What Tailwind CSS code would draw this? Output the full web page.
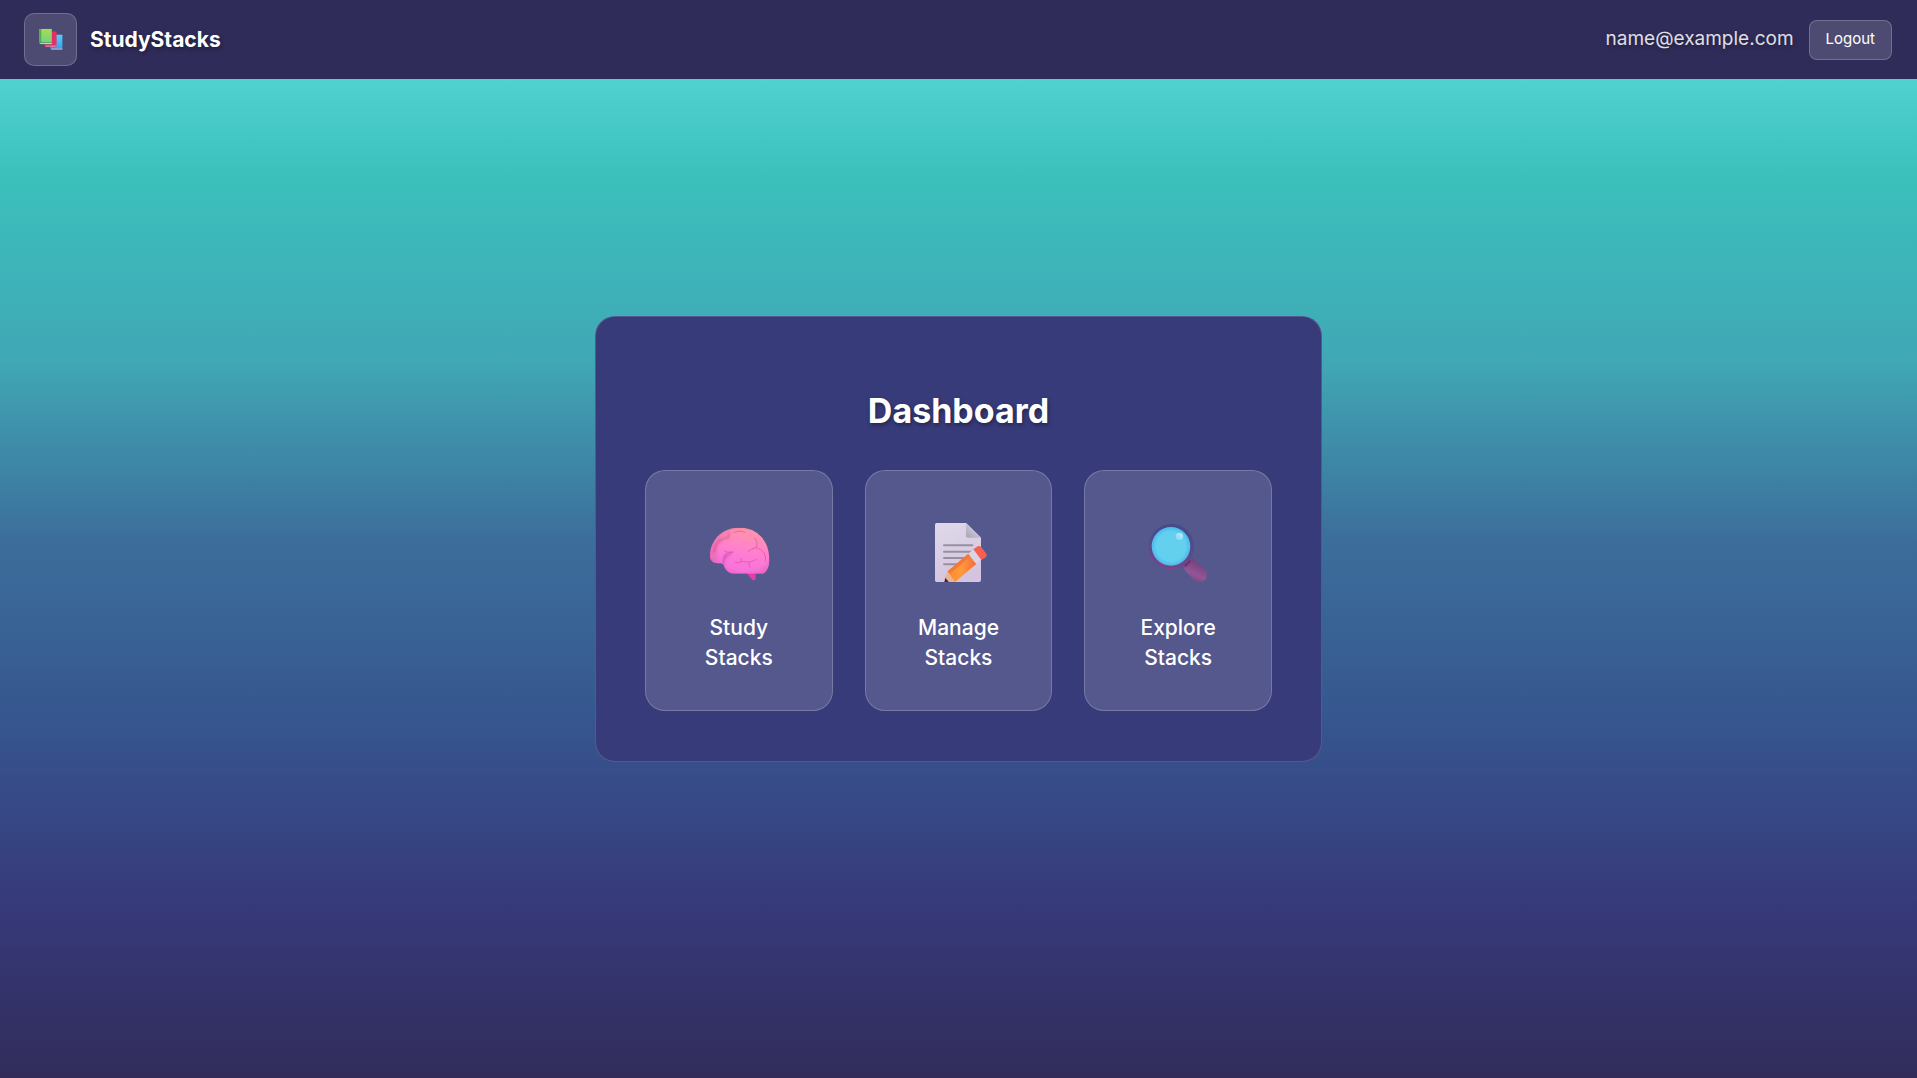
<!DOCTYPE html>
<html lang="en">
  <head>
    <meta charset="UTF-8" />
    <meta name="viewport" content="width=device-width, initial-scale=1.0" />
    <title>StudyStacks - Dashboard</title>
    <script src="https://cdn.jsdelivr.net/npm/@tailwindcss/browser@4"></script>
  </head>

  <body
    class="min-h-screen bg-[linear-gradient(180deg,#61e0df_0%,#3bc0bc_16.67%,#40a8b5_33.33%,#3c6e9b_50%,#36568f_66.67%,#373a7b_83.33%,#312c5a_100%)] font-['Inter',sans-serif] text-white"
  >
    <!-- Header -->
    <header
      class="fixed inset-x-0 top-0 flex items-center justify-between bg-[#302c5a] py-[13px] pr-[25px] pl-6"
    >
      <a href="#" class="flex items-center gap-[13px]">
        <span
          class="flex size-[53px] items-center justify-center rounded-[10px] border border-white/20 bg-white/15"
        >
          <svg class="size-6" viewBox="56 60 75 75" aria-hidden="true">
            <defs>
              <linearGradient id="bookGreen" x1="0" y1="0" x2="0" y2="1">
                <stop offset="0" stop-color="#a8dc50" />
                <stop offset="1" stop-color="#70d284" />
              </linearGradient>
              <linearGradient id="bookBlue" x1="0" y1="0" x2="0" y2="1">
                <stop offset="0" stop-color="#55cff4" />
                <stop offset="1" stop-color="#35a6f6" />
              </linearGradient>
            </defs>
            <path d="M91 81h38v42H91z" fill="url(#bookBlue)" />
            <path d="M91 123h38v6H94q-3 0-3-3z" fill="#2d78c8" />
            <path d="M94 124h35v3H94z" fill="#d5c8ef" />
            <path d="M73 71h38v42H73z" fill="#e52e63" />
            <path d="M73 113h38v7H76q-3 0-3-3z" fill="#b92558" />
            <path d="M76 115h35v3H76z" fill="#d5c2e0" />
            <path d="M57 63h39v43H57z" fill="url(#bookGreen)" />
            <path d="M57 63h6v43h-6z" fill="#55a955" />
            <path d="M57 105h39v6H60q-3 0-3-3z" fill="#469a63" />
            <path d="M60 107h36v3H60z" fill="#d5cce5" />
          </svg>
        </span>
        <span
          class="text-[21px] font-bold [text-shadow:1px_2px_4px_rgba(0,0,0,0.4)]"
          >StudyStacks</span
        >
      </a>

      <div class="flex items-center gap-[15px]">
        <span
          class="text-[19px] text-white/85 [text-shadow:1px_2px_4px_rgba(0,0,0,0.4)]"
          >name@example.com</span
        >
        <button
          type="button"
          class="h-10 cursor-pointer rounded-lg border border-white/20 bg-white/15 px-4 text-[15px] hover:bg-white/25"
        >
          Logout
        </button>
      </div>
    </header>

    <!-- Dashboard -->
    <main class="flex min-h-screen items-center justify-center">
      <section
        class="w-full max-w-[727px] rounded-[20px] border border-white/15 bg-[#383b7a] p-[49px] pb-[50px]"
      >
        <h1
          class="mt-6 mb-[38px] text-center text-[34px] leading-[42px] font-bold [text-shadow:1px_2px_4px_rgba(0,0,0,0.4)]"
        >
          Dashboard
        </h1>

        <div class="grid grid-cols-3 gap-8">
          <!-- Study -->
          <a
            href="#"
            class="flex flex-col items-center rounded-[20px] border border-white/20 bg-white/15 px-8 py-[37px] hover:bg-white/25"
          >
            <span class="mb-[15px] flex h-[90px] items-center">
              <svg class="size-16" viewBox="51 36 192 192" aria-hidden="true">
                <defs>
                  <linearGradient id="brain" x1="0.65" y1="0" x2="0.4" y2="1">
                    <stop offset="0" stop-color="#ff9aa0" />
                    <stop offset="0.5" stop-color="#ff7fd0" />
                    <stop offset="1" stop-color="#f56be2" />
                  </linearGradient>
                  <radialGradient id="brainEdge" cx="0.58" cy="0.5" r="0.58">
                    <stop offset="0.65" stop-color="#d8508c" stop-opacity="0" />
                    <stop offset="1" stop-color="#cf5f92" stop-opacity="0.6" />
                  </radialGradient>
                  <filter id="brainSoft">
                    <feGaussianBlur stdDeviation="2.5" />
                  </filter>
                  <clipPath id="brainClip">
                    <path
                      d="M60 141C60 108 79 75 112 63C130 55 158 55 176 60C207 69 229 95 235 125C241 155 239 181 220 194H132C116 194 106 184 101 168C96 161 88 165 79 162C66 160 60 152 60 141Z"
                    />
                  </clipPath>
                </defs>
                <path d="M170 192H197V210Q194 217 187 212Z" fill="#e43bb4" />
                <g clip-path="url(#brainClip)">
                  <path d="M50 45H245V205H50Z" fill="url(#brain)" />
                  <path d="M50 45H245V205H50Z" fill="url(#brainEdge)" />
                  <path
                    d="M100 168C96 152 106 138 126 130"
                    fill="none"
                    stroke="#c64bb5"
                    stroke-width="9"
                    opacity="0.55"
                    filter="url(#brainSoft)"
                  />
                  <path
                    d="M73 132C74 105 88 90 110 87Q120 83 116 73"
                    fill="none"
                    stroke="#d2527d"
                    stroke-width="6"
                    opacity="0.65"
                    filter="url(#brainSoft)"
                  />
                </g>
                <g
                  fill="none"
                  stroke="#df4c91"
                  stroke-width="3"
                  stroke-linecap="round"
                  opacity="0.65"
                >
                  <path d="M132 71Q148 62 165 70" />
                  <path d="M174 127Q185 119 197 116Q203 109 201 99L193 87" />
                  <path d="M197 116Q216 121 223 133Q229 143 226 156" />
                  <path d="M103 125Q111 133 130 129M110 133Q105 140 104 147" />
                  <path
                    d="M136 160Q151 163 158 157Q179 164 199 151M153 156L154 149M178 161Q175 167 179 174"
                  />
                </g>
              </svg>
            </span>
            <span class="text-center text-[21px] leading-[30px] font-medium"
              >Study<br />Stacks</span
            >
          </a>

          <!-- Manage -->
          <a
            href="#"
            class="flex flex-col items-center rounded-[20px] border border-white/20 bg-white/15 px-8 py-[37px] hover:bg-white/25"
          >
            <span class="mb-[15px] flex h-[90px] items-center">
              <svg class="size-16" viewBox="33 36 192 192" aria-hidden="true">
                <defs>
                  <linearGradient id="paper" x1="0" y1="0" x2="0.3" y2="1">
                    <stop offset="0" stop-color="#dedae9" />
                    <stop offset="1" stop-color="#d5c4df" />
                  </linearGradient>
                  <linearGradient id="fold" x1="0" y1="1" x2="0.6" y2="0.3">
                    <stop offset="0" stop-color="#a9a2b7" />
                    <stop offset="1" stop-color="#d0cad9" />
                  </linearGradient>
                  <linearGradient id="pencil" x1="0" y1="0" x2="1" y2="0">
                    <stop offset="0" stop-color="#ff8a2f" />
                    <stop offset="0.5" stop-color="#ff9a3c" />
                    <stop offset="1" stop-color="#f46b3c" />
                  </linearGradient>
                  <clipPath id="paperClip">
                    <path d="M55 36H225V219H55Z" />
                  </clipPath>
                </defs>
                <path
                  d="M65 42H153L198 86V213Q198 219 192 219H65Q60 219 60 214V47Q60 42 65 42Z"
                  fill="url(#paper)"
                />
                <path d="M153 42L198 86H158Q153 86 153 81Z" fill="url(#fold)" />
                <path
                  d="M87 109H172M87 128H172M87 147H150M87 166H130"
                  stroke="#96919f"
                  stroke-width="6"
                  stroke-linecap="round"
                />
                <g clip-path="url(#paperClip)">
                  <path d="M98 187L122 217L112 226H88L90 208Z" fill="#e8b597" />
                  <path d="M91 206L102 220H88Z" fill="#49213f" />
                  <path d="M98 187L160 134L184 165L120 219Z" fill="url(#pencil)" />
                  <path d="M98 187L160 134L166 142L104 195Z" fill="#f27a35" />
                </g>
                <path d="M160 134L175 121L199 151L184 165Z" fill="#d9d4e7" />
                <path
                  d="M175 121L186 113Q193 108 199 115L214 134Q218 140 212 145L199 153Z"
                  fill="#f95f50"
                />
              </svg>
            </span>
            <span class="text-center text-[21px] leading-[30px] font-medium"
              >Manage<br />Stacks</span
            >
          </a>

          <!-- Explore -->
          <a
            href="#"
            class="flex flex-col items-center rounded-[20px] border border-white/20 bg-white/15 px-8 py-[37px] hover:bg-white/25"
          >
            <span class="mb-[15px] flex h-[90px] items-center">
              <svg class="size-16" viewBox="45 36 192 192" aria-hidden="true">
                <defs>
                  <linearGradient id="rim" x1="0.6" y1="0" x2="0.4" y2="1">
                    <stop offset="0" stop-color="#3f4a86" />
                    <stop offset="0.4" stop-color="#4f4a87" />
                    <stop offset="1" stop-color="#804187" />
                  </linearGradient>
                  <linearGradient id="handle" x1="0.7" y1="0.1" x2="0.3" y2="1">
                    <stop offset="0" stop-color="#714078" />
                    <stop offset="0.6" stop-color="#935596" />
                    <stop offset="1" stop-color="#7a427f" />
                  </linearGradient>
                  <radialGradient id="lens">
                    <stop offset="0.75" stop-color="#63d0ee" />
                    <stop offset="1" stop-color="#4db9ee" />
                  </radialGradient>
                  <linearGradient id="shine" x1="1" y1="0" x2="0" y2="1">
                    <stop offset="0" stop-color="#c4edfa" />
                    <stop offset="1" stop-color="#83d5f3" />
                  </linearGradient>
                </defs>
                <path
                  d="M161 171L177 153Q183 149 190 153L218 176Q230 187 227 204Q222 219 205 220Q197 220 189 213L164 187Q157 179 161 171Z"
                  fill="url(#handle)"
                />
                <path d="M159 168L174 153L180 157L164 174Z" fill="#5e3468" />
                <circle cx="121" cy="113" r="68" fill="url(#rim)" />
                <circle
                  cx="121"
                  cy="113"
                  r="64"
                  fill="none"
                  stroke="#53579a"
                  stroke-width="2"
                  opacity="0.6"
                />
                <circle cx="120" cy="112" r="58" fill="url(#lens)" />
                <circle cx="145" cy="82" r="11" fill="url(#shine)" />
              </svg>
            </span>
            <span class="text-center text-[21px] leading-[30px] font-medium"
              >Explore<br />Stacks</span
            >
          </a>
        </div>
      </section>
    </main>
  </body>
</html>
